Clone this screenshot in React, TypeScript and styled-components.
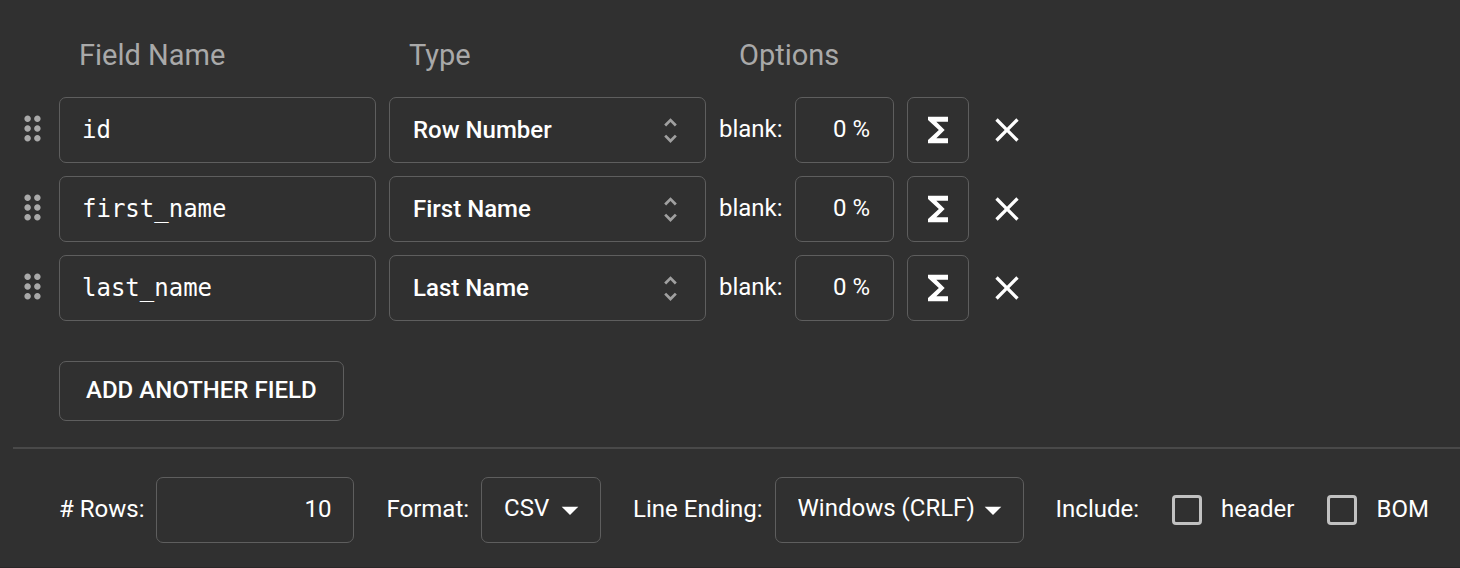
import React, { useState } from "react";
import styled, { createGlobalStyle, css } from "styled-components";
import {
  MdArrowDropDown,
  MdClose,
  MdDragIndicator,
  MdFunctions,
  MdUnfoldMore,
} from "react-icons/md";

const GlobalStyle = createGlobalStyle`
  * { box-sizing: border-box; }
  body {
    margin: 0;
    background: #303030;
    color: #fff;
    font: 400 24px/32px Roboto, sans-serif;
  }
`;

const outlined = css`
  height: 66px;
  border: 1px solid #5e5e5e;
  border-radius: 7px;
  background: transparent;
  color: inherit;
  font: inherit;
`;

const Page = styled.main`
  padding: 32px 0 24px 13px;
  border-bottom: 1px solid #292728;
`;

const Schema = styled.section`
  display: flex;
  flex-direction: column;
  gap: 13px;
`;

const Grid = styled.div`
  display: grid;
  grid-template-columns: 33px 317px 317px 1fr;
  column-gap: 13px;
  align-items: center;
`;

const Heading = styled.span`
  padding-left: 20px;
  height: 52px;
  font-size: 29px;
  line-height: 46px;
  color: #a9a9a9;

  &:first-child {
    grid-column-start: 2;
  }
`;

const DragHandle = styled.span`
  display: flex;
  width: 39px;
  padding-bottom: 3px;
  color: #a9a9a9;
`;

const NameInput = styled.input`
  ${outlined}
  width: 100%;
  padding: 0 22px;
  font-family: "DejaVu Sans Mono", monospace;
`;

const TypeButton = styled.button`
  ${outlined}
  display: flex;
  align-items: center;
  justify-content: space-between;
  padding: 0 18px 0 23px;
  font-weight: 500;
  cursor: pointer;

  svg {
    color: #a0a0a0;
  }
`;

const Options = styled.div`
  display: flex;
  align-items: center;
`;

const BlankLabel = styled.label`
  width: 76px;
  padding-bottom: 2px;
`;

const BlankBox = styled.span`
  ${outlined}
  display: flex;
  align-items: center;
  justify-content: flex-end;
  gap: 6px;
  width: 99px;
  padding: 0 23px 2px 0;
  margin-right: 13px;
`;

const BlankInput = styled.input`
  width: 40px;
  padding: 0;
  border: 0;
  background: transparent;
  color: inherit;
  font: inherit;
  text-align: right;
`;

const FormulaButton = styled.button`
  ${outlined}
  display: grid;
  place-items: center;
  width: 62px;
  padding: 0;
  cursor: pointer;
`;

const RemoveButton = styled.button`
  display: grid;
  place-items: center;
  margin-left: 18px;
  padding: 0;
  border: 0;
  background: transparent;
  color: inherit;
  cursor: pointer;
`;

const AddButton = styled.button`
  ${outlined}
  height: 60px;
  margin: 40px 0 26px 46px;
  padding: 0 26px 2px;
  font-weight: 500;
  text-transform: uppercase;
  cursor: pointer;
`;

const Divider = styled.hr`
  height: 2px;
  margin: 0 0 28px;
  border: 0;
  background: #494949;
`;

const Footer = styled.section`
  display: flex;
  align-items: center;
  gap: 32px;
  padding-left: 46px;
  white-space: nowrap;
`;

const Control = styled.div`
  display: flex;
  align-items: center;
  gap: 12px;
`;

const Caption = styled.span`
  padding-bottom: 2px;
`;

const RowsInput = styled.input`
  ${outlined}
  width: 198px;
  padding: 0 22px 2px;
  text-align: right;
`;

const SelectBox = styled.span<{ $width: number }>`
  position: relative;
  display: block;
  width: ${(p) => p.$width}px;

  svg {
    position: absolute;
    top: 13px;
    right: 11px;
    pointer-events: none;
  }
`;

const Select = styled.select`
  ${outlined}
  width: 100%;
  padding: 0 48px 4px 22px;
  appearance: none;

  option {
    background: #424242;
  }
`;

const Include = styled.div`
  display: flex;
  align-items: center;
  gap: 33px;
`;

const CheckLabel = styled.label`
  display: flex;
  align-items: center;
  gap: 19px;
`;

const Checkbox = styled.input`
  width: 30px;
  height: 30px;
  margin: 0;
  border: 3px solid #c1c1c1;
  border-radius: 4px;
  appearance: none;

  &:checked {
    background: #c1c1c1;
  }
`;

const initialFields = [
  { name: "id", type: "Row Number" },
  { name: "first_name", type: "First Name" },
  { name: "last_name", type: "Last Name" },
];

function FieldRow({ name, type }: { name: string; type: string }) {
  return (
    <Grid>
      <DragHandle>
        <MdDragIndicator size={39} />
      </DragHandle>
      <NameInput defaultValue={name} aria-label="Field Name" spellCheck={false} />
      <TypeButton type="button">
        {type}
        <MdUnfoldMore size={33} />
      </TypeButton>
      <Options>
        <BlankLabel htmlFor={`blank-${name}`}>blank:</BlankLabel>
        <BlankBox>
          <BlankInput id={`blank-${name}`} defaultValue="0" />%
        </BlankBox>
        <FormulaButton type="button" aria-label="Formula">
          <MdFunctions size={40} />
        </FormulaButton>
        <RemoveButton type="button" aria-label="Remove field">
          <MdClose size={40} />
        </RemoveButton>
      </Options>
    </Grid>
  );
}

export default function App() {
  const [fields, setFields] = useState(initialFields);
  const addField = () =>
    setFields([...fields, { name: `field_${fields.length + 1}`, type: "Row Number" }]);

  return (
    <Page>
      <GlobalStyle />
      <Schema>
        <Grid>
          <Heading>Field Name</Heading>
          <Heading>Type</Heading>
          <Heading>Options</Heading>
        </Grid>
        {fields.map((field) => (
          <FieldRow key={field.name} {...field} />
        ))}
      </Schema>
      <AddButton type="button" onClick={addField}>
        Add another field
      </AddButton>
      <Divider />
      <Footer>
        <Control>
          <Caption as="label" htmlFor="rows"># Rows:</Caption>
          <RowsInput id="rows" defaultValue="10" />
        </Control>
        <Control>
          <Caption as="label" htmlFor="format">Format:</Caption>
          <SelectBox $width={120}>
            <Select id="format">
              <option>CSV</option>
            </Select>
            <MdArrowDropDown size={40} />
          </SelectBox>
        </Control>
        <Control>
          <Caption as="label" htmlFor="line-ending">Line Ending:</Caption>
          <SelectBox $width={249}>
            <Select id="line-ending">
              <option>Windows (CRLF)</option>
            </Select>
            <MdArrowDropDown size={40} />
          </SelectBox>
        </Control>
        <Include role="group" aria-labelledby="include">
          <Caption id="include">Include:</Caption>
          <CheckLabel>
            <Checkbox type="checkbox" />
            <Caption>header</Caption>
          </CheckLabel>
          <CheckLabel>
            <Checkbox type="checkbox" />
            <Caption>BOM</Caption>
          </CheckLabel>
        </Include>
      </Footer>
    </Page>
  );
}
